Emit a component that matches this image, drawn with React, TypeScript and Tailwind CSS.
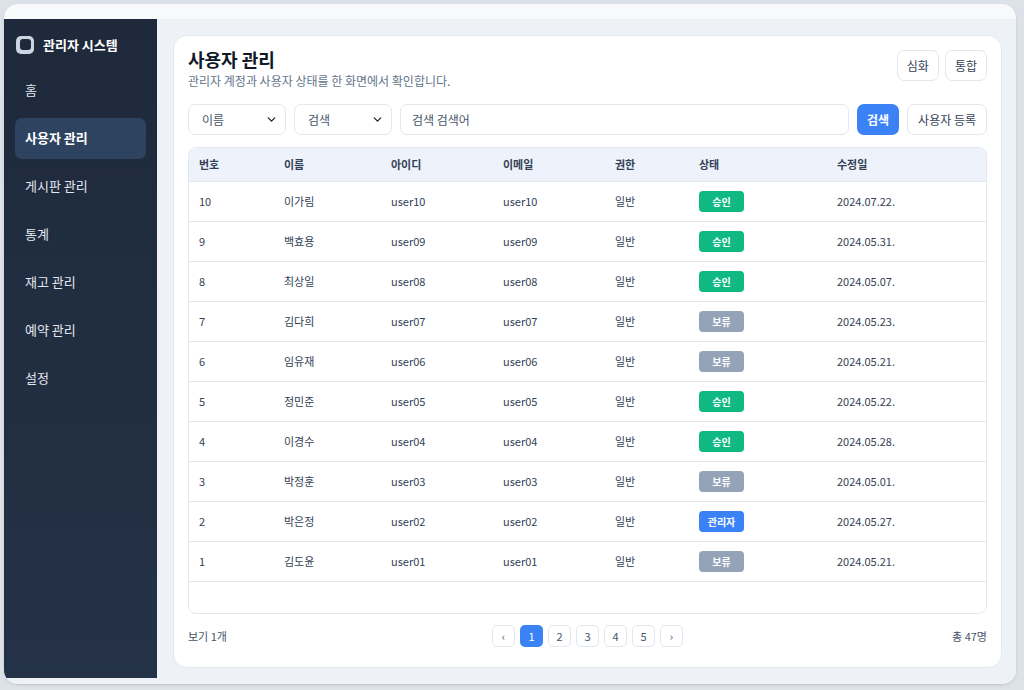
import { ChevronDown } from "lucide-react";

const rows = [
  { no: 10, name: "이가림", id: "user10", st: "승인", date: "2024.07.22." },
  { no: 9, name: "백효용", id: "user09", st: "승인", date: "2024.05.31." },
  { no: 8, name: "최상일", id: "user08", st: "승인", date: "2024.05.07." },
  { no: 7, name: "김다희", id: "user07", st: "보류", date: "2024.05.23." },
  { no: 6, name: "임유재", id: "user06", st: "보류", date: "2024.05.21." },
  { no: 5, name: "정민준", id: "user05", st: "승인", date: "2024.05.22." },
  { no: 4, name: "이경수", id: "user04", st: "승인", date: "2024.05.28." },
  { no: 3, name: "박정훈", id: "user03", st: "보류", date: "2024.05.01." },
  { no: 2, name: "박은정", id: "user02", st: "관리자", date: "2024.05.27." },
  { no: 1, name: "김도윤", id: "user01", st: "보류", date: "2024.05.21." },
];

const nav = ["홈", "사용자 관리", "게시판 관리", "통계", "재고 관리", "예약 관리", "설정"];

const badge: Record<string, string> = {
  승인: "bg-[#10b981]",
  보류: "bg-[#94a3b8]",
  관리자: "bg-[#3b82f6]",
};

const cols = "grid grid-cols-[85px_107px_112px_112px_84px_138px_1fr] pl-[10px]";

export default function App() {
  return (
    <div className="h-[690px] w-[1024px] bg-[#dde1e8] p-[4px] pr-[8px] pb-[6px] text-[#1f2937]" style={{ fontFamily: '"Noto Sans CJK KR", "Noto Sans", sans-serif' }}>
      <div className="flex h-full flex-col overflow-hidden rounded-[14px] bg-[#f8f9fb] shadow">
        <div className="h-[15px] shrink-0" />
        <div className="flex min-h-0 flex-1 pb-[6px] bg-[#eef1f6]">
          <aside className="w-[153px] shrink-0 bg-gradient-to-b from-[#1e293b] to-[#243247] px-[11px] pt-[16px]">
            <div className="flex items-center gap-[9px] pl-[1px] text-[13px] font-bold text-white">
              <span className="flex h-[18px] w-[18px] items-center justify-center rounded-[5px] bg-[#cbd5e1]">
                <span className="h-[11px] w-[11px] rounded-[3px] bg-[#1e293b]" />
              </span>
              관리자 시스템
            </div>
            <nav className="mt-[15px] flex flex-col gap-[7px]">
              {nav.map((n) => (
                <div key={n} className={`flex h-[41px] items-center rounded-[7px] px-[10px] text-[13px] ${n === "사용자 관리" ? "bg-[#2d4360] font-semibold text-white" : "text-[#e2e8f0]"}`}>
                  {n}
                </div>
              ))}
            </nav>
          </aside>
          <main className="flex-1 bg-[#eef1f6] pt-[16px] pl-[16px] pr-[14px] pb-[10px]">
            <div className="flex h-full flex-col rounded-[14px] border border-[#e2e8f0] bg-white px-[14px] pt-[10px] pb-[14px]">
              <div className="flex items-start justify-between">
                <div>
                  <h1 className="text-[18px] font-bold leading-[26px] text-[#111827]">사용자 관리</h1>
                  <p className="text-[12px] text-[#64748b]">관리자 계정과 사용자 상태를 한 화면에서 확인합니다.</p>
                </div>
                <div className="mt-[4px] flex gap-[6px]">
                  {["심화", "통합"].map((b) => (
                    <button key={b} className="h-[31px] rounded-[7px] border border-[#e2e8f0] px-[9px] text-[12px] text-[#334155]">{b}</button>
                  ))}
                </div>
              </div>
              <div className="mt-[14px] flex gap-[8px]">
                {[["이름", "w-[98px]"], ["검색", "w-[98px]"]].map(([t, w]) => (
                  <div key={t} className={`flex h-[31px] ${w} items-center justify-between rounded-[7px] border border-[#e2e8f0] px-[13px] pr-[7px] text-[12px] text-[#475569]`}>
                    {t}
                    <ChevronDown className="h-[13px] w-[13px] text-[#1f2937]" strokeWidth={2.5} />
                  </div>
                ))}
                <div className="flex h-[31px] flex-1 items-center rounded-[7px] border border-[#e2e8f0] px-[11px] text-[12px] text-[#475569]">검색 검색어</div>
                <button className="h-[31px] rounded-[7px] bg-[#3b82f6] px-[10px] text-[12px] font-semibold text-white">검색</button>
                <button className="h-[31px] rounded-[7px] border border-[#e2e8f0] px-[10px] text-[12px] text-[#334155]">사용자 등록</button>
              </div>
              <div className="mt-[12px] h-[467px] overflow-hidden rounded-[8px] border border-[#e2e8f0]">
                <div className={`${cols} h-[34px] items-center border-b border-[#e2e8f0] bg-[#eef2fb] text-[11px] font-semibold text-[#334155]`}>
                  {["번호", "이름", "아이디", "이메일", "권한", "상태", "수정일"].map((h) => <div key={h}>{h}</div>)}
                </div>
                {rows.map((r) => (
                  <div key={r.no} className={`${cols} h-[40px] items-center border-b border-[#e2e8f0] text-[11px] text-[#334155]`}>
                    <div>{r.no}</div>
                    <div>{r.name}</div>
                    <div>{r.id}</div>
                    <div>{r.id}</div>
                    <div>일반</div>
                    <div>
                      <span className={`inline-flex h-[21px] w-[45px] items-center justify-center rounded-[4px] text-[10px] font-bold text-white ${badge[r.st]}`}>{r.st}</span>
                    </div>
                    <div>{r.date}</div>
                  </div>
                ))}
              </div>
              <div className="mt-[11px] grid grid-cols-[1fr_auto_1fr] items-center text-[11px] text-[#475569]">
                <span>보기 1개</span>
                <div className="flex gap-[5px]">
                  {["‹", "1", "2", "3", "4", "5", "›"].map((p) => (
                    <span key={p} className={`flex h-[22px] w-[23px] items-center justify-center rounded-[5px] text-[11px] ${p === "1" ? "bg-[#3b82f6] text-white" : "border border-[#e2e8f0] text-[#475569]"}`}>{p}</span>
                  ))}
                </div>
                <span className="text-right">총 47명</span>
              </div>
            </div>
          </main>
        </div>
      </div>
    </div>
  );
}
